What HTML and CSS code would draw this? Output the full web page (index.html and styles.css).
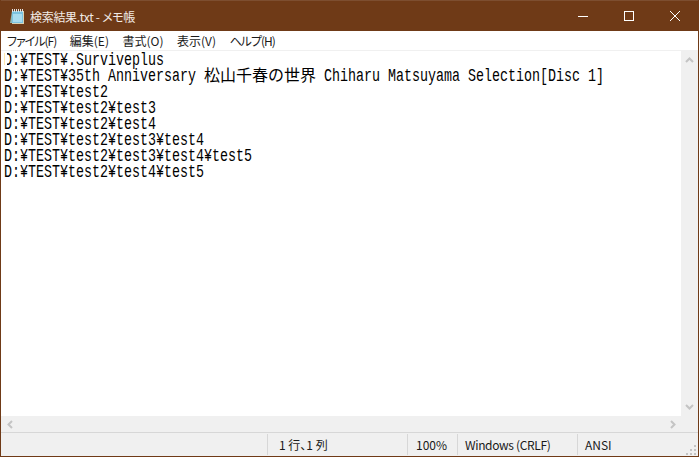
FILE: index.html
```html
<!DOCTYPE html>
<html lang="ja">
<head>
<meta charset="utf-8">
<title>検索結果.txt - メモ帳</title>
<link rel="stylesheet" href="styles.css">
</head>
<body>
<div class="window">
  <header class="titlebar">
    <svg class="app-icon" width="17" height="17" viewBox="0 0 17 17">
      <path d="M1 15L3 3h1v12z" fill="#8fb9b5"/>
      <rect x="3" y="3" width="12" height="13" fill="#d8d2b4"/>
      <rect x="3" y="3" width="11" height="12" fill="#7cc3e0"/>
      <rect x="4" y="6" width="9" height="8" fill="#a9dcef"/>
      <path d="M3.500 1v3M5.500 1v3M7.500 1v3M9.500 1v3M11.500 1v3M13.500 1v3" stroke="#e4e4e4"/>
    </svg>
    <span class="title">検索結果.txt - メモ帳</span>
    <div class="controls">
      <span class="control">
        <svg width="10" height="10" viewBox="0 0 10 10"><path d="M0 5.500h10" stroke="#fff" fill="none"/></svg>
      </span>
      <span class="control">
        <svg width="10" height="10" viewBox="0 0 10 10"><rect x=".5" y=".5" width="9" height="9" stroke="#fff" fill="none"/></svg>
      </span>
      <span class="control">
        <svg width="10" height="10" viewBox="0 0 10 10"><path d="M0 0l10 10M10 0L0 10" stroke="#fff" fill="none"/></svg>
      </span>
    </div>
  </header>
  <nav class="menubar">
    <span class="menu-item menu-kana">ファイル(F)</span>
    <span class="menu-item">編集(E)</span>
    <span class="menu-item">書式(O)</span>
    <span class="menu-item">表示(V)</span>
    <span class="menu-item menu-kana">ヘルプ(H)</span>
  </nav>
  <main class="client">
    <div class="editor-row">
      <div class="editor">
        <div class="lines">
          <div class="line">D:¥TEST¥.Surviveplus</div>
          <div class="line">D:¥TEST¥35th Anniversary <span class="wide">松山千春の世界</span> Chiharu Matsuyama Selection[Disc 1]</div>
          <div class="line">D:¥TEST¥test2</div>
          <div class="line">D:¥TEST¥test2¥test3</div>
          <div class="line">D:¥TEST¥test2¥test4</div>
          <div class="line">D:¥TEST¥test2¥test3¥test4</div>
          <div class="line">D:¥TEST¥test2¥test3¥test4¥test5</div>
          <div class="line">D:¥TEST¥test2¥test4¥test5</div>
        </div>
        <span class="caret"></span>
      </div>
      <div class="vscroll">
        <svg width="9" height="6" viewBox="0 0 9 6"><path d="M1 5l3.500-3.500L8 5" stroke="#c4c4c4" stroke-width="2" fill="none"/></svg>
        <svg width="9" height="6" viewBox="0 0 9 6"><path d="M1 1l3.500 3.500L8 1" stroke="#c4c4c4" stroke-width="2" fill="none"/></svg>
      </div>
    </div>
    <div class="hscroll">
      <svg width="6" height="9" viewBox="0 0 6 9"><path d="M5 1L1.500 4.500 5 8" stroke="#c4c4c4" stroke-width="2" fill="none"/></svg>
      <svg width="6" height="9" viewBox="0 0 6 9"><path d="M1 1l3.500 3.500L1 8" stroke="#c4c4c4" stroke-width="2" fill="none"/></svg>
    </div>
    <footer class="statusbar">
      <span class="cell cell-grow"></span>
      <span class="cell cell-pos">1 行、1 列</span>
      <span class="cell cell-zoom">100%</span>
      <span class="cell cell-eol">Windows (CRLF)</span>
      <span class="cell cell-enc">ANSI</span>
      <svg class="grip" width="12" height="12" viewBox="0 0 12 12"><path d="M9 1h2v2H9zM5 5h2v2H5zM9 5h2v2H9zM1 9h2v2H1zM5 9h2v2H5zM9 9h2v2H9z" fill="#c4c4c4"/></svg>
    </footer>
  </main>
</div>
</body>
</html>
```
FILE: styles.css
```css
* { box-sizing: border-box; }
html, body { margin: 0; height: 100%; }
body { overflow: hidden; background: #fff; }
.window {
  width: 699px;
  height: 457px;
  display: flex;
  flex-direction: column;
  background: #6f3a17;
  padding: 0 1px 1px;
  font-family: "Noto Sans CJK JP", "Liberation Sans", sans-serif;
  font-size: 12px;
  color: #1a1a1a;
  font-feature-settings: "palt";
}
.titlebar {
  height: 31px;
  flex: none;
  display: flex;
  align-items: center;
  color: #fff;
  border-top: 1px solid #7d4e30;
}
.app-icon { margin-left: 8px; flex: none; }
.title { margin-left: 4px; font-size: 12px; color: #f2ebe6; letter-spacing: -.3px; }
.controls { margin-left: auto; display: flex; height: 100%; }
.control {
  width: 46px;
  display: flex;
  align-items: center;
  justify-content: center;
}
.menubar {
  height: 19px;
  flex: none;
  background: #fff;
  display: flex;
  align-items: center;
  padding-left: 6px;
  gap: 13.5px;
  font-size: 12px;
}
.menu-kana { letter-spacing: -1px; }
.client {
  flex: 1;
  min-height: 0;
  display: flex;
  flex-direction: column;
  background: #f0f0f0;
  padding-top: 1px;
}
.editor-row { flex: 1; min-height: 0; display: flex; }
.editor {
  position: relative;
  flex: 1;
  min-width: 0;
  background: #fff;
  padding: 1px 0 0 3px;
  font-feature-settings: normal;
  overflow: hidden;
}
.lines {
  width: 900px;
  font-family: "Liberation Mono", monospace;
  font-size: 18px;
  line-height: 16px;
  color: #000;
  transform: scaleX(0.7407);
  transform-origin: left top;
}
.line { height: 16px; white-space: pre; }
.wide {
  display: inline-block;
  vertical-align: top;
  width: 151.2px;
  font-family: "Noto Sans CJK JP", sans-serif;
  font-size: 16px;
  line-height: 16px;
  transform: translateY(-2px) scaleX(1.35);
  transform-origin: left center;
}
.caret {
  position: absolute;
  left: 4px;
  top: 1px;
  width: 2px;
  height: 16px;
  background: #fff;
}
.vscroll {
  width: 17px;
  flex: none;
  display: flex;
  flex-direction: column;
  justify-content: space-between;
  align-items: center;
  padding: 6px 0;
}
.hscroll {
  height: 16px;
  flex: none;
  display: flex;
  justify-content: space-between;
  align-items: center;
  padding: 0 22px 0 6px;
}
.statusbar {
  position: relative;
  height: 24px;
  flex: none;
  border-top: 1px solid #d7d7d7;
  display: flex;
  padding-top: 1px;
  font-size: 12px;
  line-height: 21px;
}
.cell { border-left: 1px solid #d7d7d7; height: 21px; white-space: nowrap; flex: none; }
.cell-grow { flex: 1; border-left: 0; }
.cell-pos { width: 140px; padding-left: 11px; }
.cell-zoom { width: 50px; padding-left: 8px; }
.cell-eol { width: 120px; padding-left: 7px; letter-spacing: -.35px; }
.cell-enc { width: 121px; padding-left: 7px; }
.grip { position: absolute; right: 1px; bottom: 0; }
```
